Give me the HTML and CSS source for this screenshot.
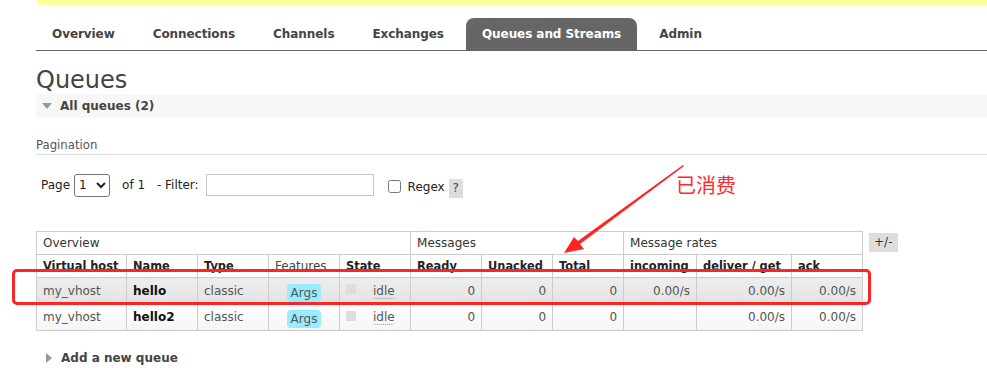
FILE: index.html
```html
<!DOCTYPE html>
<html lang="en">
<head>
    <meta charset="UTF-8">
    <title>RabbitMQ Management</title>
    <link rel="stylesheet" href="styles.css">
</head>
<body>
    <div class="page">
        <div class="status-bar"></div>

        <ul class="tabs">
            <li><a href="#">Overview</a></li>
            <li><a href="#">Connections</a></li>
            <li><a href="#">Channels</a></li>
            <li><a href="#">Exchanges</a></li>
            <li class="selected"><a href="#">Queues and Streams</a></li>
            <li><a href="#">Admin</a></li>
        </ul>

        <h1>Queues</h1>

        <div class="section-head">
            <span class="tri-down"></span>
            All queues (2)
        </div>

        <h3 class="pagination-title">Pagination</h3>

        <div class="filter-row">
            <span class="lbl">Page</span>
            <select class="page-select"><option>1</option></select>
            <span class="lbl of">of 1</span>
            <span class="lbl">&nbsp;- Filter:</span>
            <input type="text" class="filter-input">
            <label class="regex"><input type="checkbox"> Regex</label>
            <span class="help">?</span>
        </div>

        <div class="table-wrap">
            <table class="list">
                <colgroup>
                    <col style="width:90px"><col style="width:71px"><col style="width:71px">
                    <col style="width:71px"><col style="width:71px"><col style="width:71px">
                    <col style="width:71px"><col style="width:71px"><col style="width:73px">
                    <col style="width:95px"><col style="width:71px">
                </colgroup>
                <thead>
                    <tr class="group-row">
                        <th colspan="5">Overview</th>
                        <th colspan="3">Messages</th>
                        <th colspan="3">Message rates</th>
                    </tr>
                    <tr class="head-row">
                        <th>Virtual host</th>
                        <th>Name</th>
                        <th>Type</th>
                        <th class="plain">Features</th>
                        <th>State</th>
                        <th>Ready</th>
                        <th>Unacked</th>
                        <th>Total</th>
                        <th>incoming</th>
                        <th>deliver / get</th>
                        <th>ack</th>
                    </tr>
                </thead>
                <tbody>
                    <tr class="alt1">
                        <td>my_vhost</td>
                        <td class="qname">hello</td>
                        <td>classic</td>
                        <td class="c"><span class="badge">Args</span></td>
                        <td><span class="state-box"></span><abbr>idle</abbr></td>
                        <td class="r">0</td>
                        <td class="r">0</td>
                        <td class="r">0</td>
                        <td class="r">0.00/s</td>
                        <td class="r">0.00/s</td>
                        <td class="r">0.00/s</td>
                    </tr>
                    <tr class="alt2">
                        <td>my_vhost</td>
                        <td class="qname">hello2</td>
                        <td>classic</td>
                        <td class="c"><span class="badge">Args</span></td>
                        <td><span class="state-box"></span><abbr>idle</abbr></td>
                        <td class="r">0</td>
                        <td class="r">0</td>
                        <td class="r">0</td>
                        <td class="r"></td>
                        <td class="r">0.00/s</td>
                        <td class="r">0.00/s</td>
                    </tr>
                </tbody>
            </table>
            <span class="toggle">+/-</span>
        </div>

        <div class="section-head closed">
            <span class="tri-right"></span>
            Add a new queue
        </div>
    </div>

    <!-- annotation drawn on top of the screenshot -->
    <div class="mark-box"></div>
    <div class="mark-text">已消费</div>
    <svg class="mark-arrow" width="987" height="368" viewBox="0 0 987 368">
        <polygon points="683,165 684,166 580,244 584,249 564,253 574,237 578,241" fill="#ff2424"/>
    </svg>
</body>
</html>
```

FILE: styles.css
```css
body {
    margin: 0;
    font-family: "DejaVu Sans", Verdana, sans-serif;
    font-size: 12px;
    color: #484848;
    background: #fff;
}
.page {
    padding-left: 36px;
}
.status-bar {
    height: 5px;
    background: #ffff99;
    border-bottom-left-radius: 6px;
}

/* tabs */
.tabs {
    list-style: none;
    margin: 13px 0 0 0;
    padding: 0;
    display: flex;
    border-bottom: 1px solid #666;
}
.tabs li {
    margin-right: 6px;
}
.tabs a {
    display: block;
    padding: 0 16px;
    height: 32px;
    line-height: 33px;
    font-weight: bold;
    font-size: 12px;
    letter-spacing: -0.07px;
    color: #444;
    text-decoration: none;
}
.tabs li.selected a {
    background: #666;
    color: #fff;
    border-radius: 8px 8px 0 0;
}

h1 {
    margin: 16px 0 0 0;
    font-size: 24px;
    font-weight: normal;
    color: #444;
    line-height: 27px;
}

.section-head {
    background: #f7f7f7;
    height: 24px;
    line-height: 24px;
    font-weight: bold;
    font-size: 12px;
    color: #444;
    display: flex;
    align-items: center;
    gap: 8px;
    padding-left: 6px;
}
.section-head.closed {
    background: none;
    margin-top: 15px;
    padding-left: 10px;
}
.tri-down {
    width: 0;
    height: 0;
    border-left: 5px solid transparent;
    border-right: 5px solid transparent;
    border-top: 6px solid #999;
}
.tri-right {
    width: 0;
    height: 0;
    border-top: 5px solid transparent;
    border-bottom: 5px solid transparent;
    border-left: 6px solid #999;
    margin-right: 1px;
}

.pagination-title {
    margin: 20px 0 0 0;
    font-size: 11.7px;
    font-weight: normal;
    color: #555;
    padding-bottom: 2px;
    border-bottom: 1px solid #ddd;
}

.filter-row {
    display: flex;
    align-items: center;
    margin-top: 18px;
    padding-left: 5px;
    height: 24px;
}
.lbl {
    color: #222;
}
.page-select {
    margin: 0 12px 0 4px;
    width: 36px;
    height: 23px;
    font-family: "DejaVu Sans", sans-serif;
    font-size: 12px;
    border: 1px solid #767676;
    border-radius: 3px;
    background: #fff;
    color: #222;
}
.of {
    margin-right: 8px;
}
.filter-input {
    margin-left: 7px;
    width: 164px;
    height: 18px;
    border: 1px solid #c6c6c6;
    padding: 1px;
}
.regex {
    display: flex;
    align-items: center;
    margin-left: 11px;
    margin-top: 3px;
    color: #222;
    gap: 3px;
}
.regex input {
    margin: 0 4px 0 3px;
    width: 13px;
    height: 13px;
}
.help {
    margin-left: 4px;
    margin-top: 6px;
    background: #ddd;
    width: 14px;
    height: 19px;
    line-height: 19px;
    text-align: center;
    color: #444;
}

/* queues table */
.table-wrap {
    display: flex;
    align-items: flex-start;
    margin-top: 34px;
}
table.list {
    border-collapse: collapse;
    table-layout: fixed;
    width: 826px;
}
.list th, .list td {
    border: 1px solid #ccc;
    padding: 0 6px;
    text-align: left;
    white-space: nowrap;
}
.group-row th {
    height: 22px;
    font-weight: normal;
    color: #333;
}
.head-row th {
    height: 23px;
    font-size: 11.4px;
    font-weight: bold;
    color: #222;
    vertical-align: top;
    padding-top: 4px;
    line-height: 14px;
    box-sizing: border-box;
}
.head-row th.plain {
    font-size: 12px;
    font-weight: normal;
    color: #444;
}
.list td {
    height: 25px;
    color: #555;
}
tr.alt1 td {
    background: linear-gradient(#eeeeee, #e2e2e2);
}
tr.alt2 td {
    height: 26px;
    background: linear-gradient(#ffffff, #f5f5f5);
}
.list td.r {
    text-align: right;
}
.list td.c {
    text-align: center;
}
.list td.qname {
    font-weight: bold;
    color: #111;
}
.badge {
    display: inline-block;
    background: #99ebff;
    color: #555;
    border-radius: 4px;
    padding: 0 4px;
    height: 18px;
    line-height: 19px;
    position: relative;
    top: 2px;
}
.state-box {
    display: inline-block;
    width: 10px;
    height: 10px;
    background: #ddd;
    vertical-align: middle;
    margin-right: 17px;
    position: relative;
    top: -2px;
}
abbr {
    text-decoration: none;
    border-bottom: 1px dotted #999;
    border-radius: 3px;
}
.toggle {
    margin-left: 6px;
    margin-top: 2px;
    background: #ddd;
    padding: 0 5px;
    height: 19px;
    line-height: 19px;
    color: #333;
}

/* red annotation */
.mark-box {
    position: absolute;
    left: 12px;
    top: 269px;
    width: 853px;
    height: 30px;
    border: 3px solid #ff2424;
    border-radius: 5px;
}
.mark-text {
    position: absolute;
    left: 676px;
    top: 170px;
    font-family: "Noto Sans CJK SC", sans-serif;
    font-size: 20px;
    color: #ff2a2a;
}
.mark-arrow {
    position: absolute;
    left: 0;
    top: 0;
    pointer-events: none;
}
```
